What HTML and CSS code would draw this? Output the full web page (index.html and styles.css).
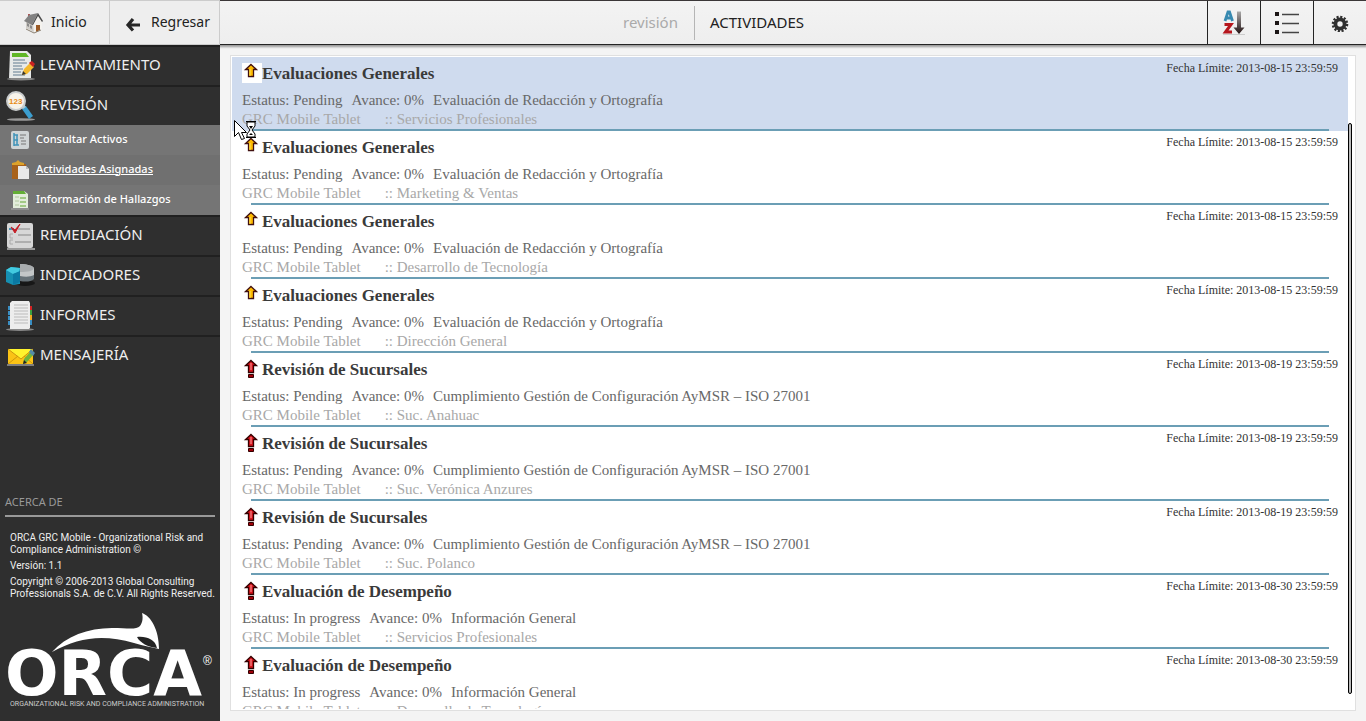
FILE: index.html
```html
<!DOCTYPE html>
<html lang="es">
<head>
<meta charset="utf-8">
<title>ORCA GRC Mobile - Actividades</title>
<link rel="stylesheet" href="styles.css">
</head>
<body>
<div class="app">
  <header class="topbar">
    <nav class="topnav">
      <a class="topnav-link" href="#inicio">
        <svg width="22" height="24" viewBox="0 0 22 24" aria-hidden="true"><path d="M3 10v7l8 4V12z" fill="#cfccc7"/><path d="M10 13l5-8 4 6v7l-8 4z" fill="#f4f2ee"/><path d="M13 14h4v5l-4 2z" fill="#9a5a26"/><path d="M4 12l2 1v3l-2-1zM7 14l2 1v3l-2-1z" fill="#8a8a8a"/><path d="M5 3h2v4H5z" fill="#a55"/><path d="M1 10L6 4l9-2-5 10-1 2z" fill="#828282"/><path d="M15 2l5 8-1 1-4-6-5 9-1 0z" fill="#4a4a4a"/><path d="M3 18l8 4 7-3" stroke="#8a8072" fill="none"/></svg>
        <span>Inicio</span>
      </a>
      <a class="topnav-link topnav-back" href="#regresar">
        <svg width="18" height="18" viewBox="0 0 18 18" aria-hidden="true"><path d="M9 3L4 9l5 5.500M4 9h12" fill="none" stroke="#262626" stroke-width="3.200"/></svg>
        <span>Regresar</span>
      </a>
    </nav>
    <div class="crumbs"><span class="crumb-parent">revisión</span><h1 class="crumb-title">ACTIVIDADES</h1></div>
    <div class="tools">
      <button class="tool" aria-label="Ordenar"><svg width="24" height="26" viewBox="0 0 24 26"><defs><linearGradient id="down" x2="0" y2="1"><stop stop-color="#aaa"/><stop offset="1" stop-color="#211"/></linearGradient></defs><path d="M3 11L6 2h1.500l3 9M4.500 8h5" fill="none" stroke="#3789b0" stroke-width="2.800"/><path d="M2.500 14.500H9l-5.500 7.500H10" fill="none" stroke="#b5161d" stroke-width="3"/><path d="M15 1.500h4v16h3.500L17 24l-5.500-6.500H15z" fill="url(#down)"/><path d="M1 24.500h22" stroke="#ccc"/></svg></button>
      <button class="tool" aria-label="Lista"><svg width="26" height="26" viewBox="0 0 26 26"><path d="M1 2h4v4H1zM1 11h4v4H1zM1 20h4v4H1z" fill="#1b1515"/><path d="M8 4.500h17M8 13.500h17M8 22.500h17" stroke="#444" stroke-width="1.500"/></svg></button>
      <button class="tool" aria-label="Configuración"><svg width="18" height="18" viewBox="0 0 18 18"><circle cx="9" cy="10" r="7" fill="none" stroke="#2f2f2f" stroke-width="2.600" stroke-dasharray="2.100 1.565"/><circle cx="9" cy="10" r="4.600" fill="none" stroke="#2f2f2f" stroke-width="3.800"/></svg></button>
    </div>
  </header>

  <aside class="sidebar">
    <nav class="menu">
      <a class="menu-item" href="#levantamiento"><svg width="30" height="32" viewBox="0 0 30 32" aria-hidden="true"><ellipse cx="15" cy="29" rx="14" ry="1.500" fill="#888"/><path d="M4 1h17l4 4v23H3z" fill="#e7e9e8"/><path d="M6 3h14l3 4H6z" fill="#5eb626"/><path d="M7 10h12M7 13h14M7 16h9M7 19h10M7 22h8M7 25h12" stroke="#8fa0ad" stroke-width="1.300"/><path d="M16 25l2-6 6-6 4 4-7 7z" fill="#f4b82c"/><path d="M24 12l2-1 3 3-2 3-4-4z" fill="#c92222"/><path d="M16 25l1-4 3 3z" fill="#333"/></svg><span>LEVANTAMIENTO</span></a>
      <a class="menu-item" href="#revision"><svg width="30" height="32" viewBox="0 0 30 32" aria-hidden="true"><ellipse cx="15" cy="29.500" rx="14" ry="1.300" fill="#999"/><path d="M16 19l4-3 7 10-4 3z" fill="#3b9ed0"/><path d="M14 17l4-3 2 3-3 2z" fill="#a8c9d8"/><circle cx="10" cy="11" r="9" fill="#f7f3ea" stroke="#c9cccd" stroke-width="2"/><text x="3" y="14" class="lens-text">123</text></svg><span>REVISIÓN</span></a>
      <div class="submenu">
        <a class="submenu-item" href="#activos"><svg width="20" height="20" viewBox="0 0 20 20" aria-hidden="true"><rect x="1" y="1" width="18" height="18" rx="2" fill="#d0d5d6"/><path d="M4 3v13M4 5h4M4 10h4M4 15h5M7 5v10" stroke="#3f93b8" stroke-width="1.500" fill="none"/><path d="M10 5h6M10 8h4M11 11h5M11 14h5" stroke="#777"/></svg><span>Consultar Activos</span></a>
        <a class="submenu-item is-current" href="#asignadas"><svg width="20" height="20" viewBox="0 0 20 20" aria-hidden="true"><path d="M2 4h14v15H2z" fill="#a8621b"/><path d="M2 3l4-1 2-2 2 2 4 1v2H2z" fill="#dda32b"/><path d="M8 6h8l3 3v10H8z" fill="#e9e9e9"/><path d="M16 6v3h3" fill="#bbb"/></svg><span>Actividades Asignadas</span></a>
        <a class="submenu-item" href="#hallazgos"><svg width="20" height="20" viewBox="0 0 20 20" aria-hidden="true"><path d="M3 1h11l4 3v14H3z" fill="#e3eddb"/><path d="M3 1h11l2 3H3z" fill="#63ae35"/><path d="M5 7h4M5 11h4M5 15h4" stroke="#b0c79e"/><path d="M10 8h6M10 12h6M10 16h6" stroke="#8dbf6a" stroke-width="1.500"/><path d="M1 19h18" stroke="#aaa"/></svg><span>Información de Hallazgos</span></a>
      </div>
      <a class="menu-item" href="#remediacion"><svg width="30" height="32" viewBox="0 0 30 32" aria-hidden="true"><path d="M1 29h28" stroke="#999" stroke-width="2"/><rect x="1" y="3" width="26" height="25" rx="2" fill="#d7d7d7"/><path d="M12 9h12M12 15h13M9 22h16" stroke="#a3a3a3" stroke-width="1.700"/><path d="M7 14H4v4h3M7 20H4v4h3" stroke="#aaa" fill="none"/><path d="M3 9h5" stroke="#4b94b5" stroke-width="2"/><path d="M5 7l4 3 5-6-5 9z" fill="#c41d26" stroke="#c41d26"/></svg><span>REMEDIACIÓN</span></a>
      <a class="menu-item" href="#indicadores"><svg width="30" height="32" viewBox="0 0 30 32" aria-hidden="true"><ellipse cx="19" cy="23" rx="10" ry="3" fill="#171717"/><path d="M0 10l5-3 9 1v16l-7 1-7-3z" fill="#168fb1"/><path d="M0 10l5-3 9 1-1 4-6 2z" fill="#42cae0"/><path d="M7 14l7-3v11l-7 3z" fill="#0b79a3"/><path d="M14 4c5 0 12 1 14 4v10l-14-1z" fill="#c3c6c7"/><path d="M14 4c5 0 12 1 14 4-1 3-6 4-14 4z" fill="#a9adaf"/><path d="M14 16c5 1 10 1 14-1v4c-3 3-9 3-14 2z" fill="#667177"/></svg><span>INDICADORES</span></a>
      <a class="menu-item" href="#informes"><svg width="30" height="32" viewBox="0 0 30 32" aria-hidden="true"><ellipse cx="14" cy="29.500" rx="14" ry="1.500" fill="#888"/><path d="M2 6h4v4H2zM2 11h4v4H2zM2 16h4v4H2zM2 21h4v4H2z" fill="#3a8fc4"/><path d="M23 6h3v4h-3z" fill="#d32323"/><path d="M23 10h3v5h-3z" fill="#3ea13f"/><path d="M23 15h3v5h-3z" fill="#f2aa20"/><path d="M23 20h3v5h-3z" fill="#3a8fc4"/><path d="M6 1h17l1 2v25l-1 1H4V3z" fill="#ededed"/><path d="M8 5h14M8 8h14M8 11h14M8 14h14M8 17h14M8 20h14M8 23h14" stroke="#bbb"/></svg><span>INFORMES</span></a>
      <a class="menu-item" href="#mensajeria"><svg width="30" height="32" viewBox="0 0 30 32" aria-hidden="true"><path d="M1 25h27" stroke="#ccc"/><rect x="2" y="9" width="25" height="15" rx="1" fill="#fbc315"/><path d="M2 9h25L15 19z" fill="#fff32d"/><path d="M2 24l10-8M27 24l-9-8M2 9l13 10 12-10" stroke="#ce960d" fill="none"/><path d="M17 24l1-5 7-8 3 3-7 8z" fill="#71b53d"/><path d="M23 12l2-3 4 4-2 3z" fill="#568ba8"/><path d="M17 24l1-4 3 3z" fill="#222"/></svg><span>MENSAJERÍA</span></a>
    </nav>
    <section class="about">
      <h2 class="about-title">ACERCA DE</h2>
      <div class="about-text">
        <p>ORCA GRC Mobile - Organizational Risk and Compliance Administration ©</p>
        <p>Versión: 1.1</p>
        <p>Copyright © 2006-2013 Global Consulting Professionals S.A. de C.V. All Rights Reserved.</p>
      </div>
      <svg class="logo" viewBox="0 0 220 108" role="img" aria-label="ORCA"><path d="M52 39C66 23 88 15 112 15c16 0 24 2 28-2 3-4 3-9 2-13 9 3 17 17 17 36-7-2-15-3-25-6-31-9-55-6-82 9z" fill="#fff"/><path d="M137 24c9-1 18 2 20 11-9-1-17-5-20-11z" fill="#222"/><text x="5" y="82" class="logo-word">ORCA</text><text x="203" y="52" class="logo-mark">®</text><text x="10" y="93" class="logo-tag">ORGANIZATIONAL RISK AND COMPLIANCE ADMINISTRATION</text></svg>
    </section>
  </aside>

  <main class="content">
    <div class="panel">
      <ul class="activities" id="activities"></ul>
      <div class="scrollbar"></div>
    </div>
  </main>
</div>
<svg class="pointer" width="24" height="21" viewBox="0 0 24 21" aria-hidden="true"><path d="M.5.500v16l4-4 3 7 3-1-3-6h5z" fill="#fff" stroke="#000"/><path d="M13 2h8v4l-3 4 3 4v3h-8v-3l3-4-3-4z" fill="#fff" stroke="#000"/><path d="M12 1.500h10M12 17.500h10" stroke="#000"/><path d="M15 6h4l-2 3zM15 15l2-2 2 2z" fill="#000"/></svg>
<script src="app.js"></script>
</body>
</html>
```
FILE: app.js
```js
const ortografia = "Evaluación de Redacción y Ortografía";
const iso = "Cumplimiento Gestión de Configuración AyMSR – ISO 27001";
const rows = [
  ["Evaluaciones Generales", "Pending", ortografia, "Servicios Profesionales", "2013-08-15"],
  ["Evaluaciones Generales", "Pending", ortografia, "Marketing & Ventas", "2013-08-15"],
  ["Evaluaciones Generales", "Pending", ortografia, "Desarrollo de Tecnología", "2013-08-15"],
  ["Evaluaciones Generales", "Pending", ortografia, "Dirección General", "2013-08-15"],
  ["Revisión de Sucursales", "Pending", iso, "Suc. Anahuac", "2013-08-19"],
  ["Revisión de Sucursales", "Pending", iso, "Suc. Verónica Anzures", "2013-08-19"],
  ["Revisión de Sucursales", "Pending", iso, "Suc. Polanco", "2013-08-19"],
  ["Evaluación de Desempeño", "In progress", "Información General", "Servicios Profesionales", "2013-08-30"],
  ["Evaluación de Desempeño", "In progress", "Información General", "Desarrollo de Tecnología", "2013-08-30"]
];
const medium = '<svg class="priority" width="20" height="20" viewBox="0 0 20 20" aria-hidden="true"><path d="M9 1.500L14.500 6.500h-3v7h-5v-7h-3z" fill="#fb0" stroke="#401010" stroke-width="1.300"/><path d="M8 6v7" stroke="#ffe45c"/></svg>';
const high = '<svg class="priority" width="20" height="20" viewBox="0 0 20 20" aria-hidden="true"><path d="M9 1.500L14.500 6.500h-3v7h-5v-7h-3z" fill="#d8141c" stroke="#300" stroke-width="1.300"/><path d="M9 4v7" stroke="#ea5a5e" stroke-width="2"/><path d="M6.500 15.500h5v3h-5z" fill="#a00008" stroke="#300"/></svg>';
document.getElementById("activities").innerHTML = rows.map((r, i) => `
  <li class="activity${i === 0 ? " is-selected" : ""}">
    <div class="activity-head">${i < 4 ? medium : high}<h2 class="activity-title">${r[0]}</h2><span class="due">Fecha Límite: ${r[4]} 23:59:59</span></div>
    <p class="status"><span>Estatus: ${r[1]}</span><span>Avance: 0%</span><span>${r[2]}</span></p>
    <p class="area"><span>GRC Mobile Tablet</span><span>:: ${r[3].replace("&", "&amp;")}</span></p>
  </li>`).join("");
```
FILE: styles.css
```css
* { box-sizing: border-box; }
body {
  margin: 0;
  font-family: "Noto Sans", "Open Sans", sans-serif;
  background: #f4f4f4;
}
h1, h2, p, ul { margin: 0; padding: 0; font-weight: normal; }
a { color: inherit; text-decoration: none; }
svg { flex: none; }

.app {
  display: grid;
  grid-template: 45px minmax(0, 1fr) / 220px minmax(0, 1fr);
  height: 100vh;
}

.topbar {
  grid-column: 1 / -1;
  display: grid;
  grid-template-columns: 220px 1fr auto;
  color: #222;
  background: linear-gradient(#f3f3f3, #eee);
  border-top: 1px solid #3b3738;
  border-bottom: 1px solid #242424;
  box-shadow: 0 1px 2px 1px #999;
}
.topnav { display: grid; grid-template-columns: 1fr 1fr; margin-top: -1px; margin-bottom: -1px; }
.topnav-link {
  display: flex;
  align-items: center;
  gap: 6px;
  padding-left: 23px;
  font-size: 14px;
  background: #eee;
  border: 1px solid #ccc;
  border-left-width: 0;
}
.topnav-link span { padding-bottom: 2px; }
.topnav-back { padding-left: 14px; gap: 9px; }
.topnav-back svg { margin-top: 4px; }

.crumbs { display: flex; align-items: center; justify-content: center; font-size: 15px; line-height: 34px; }
.crumb-parent { color: #aaa; padding: 0 16px 2px 0; }
.crumb-title { font-size: 15px; line-height: 32px; padding: 0 0 2px 15px; border-left: 1px solid #b5b5b5; }

.tools { display: flex; }
.tool {
  width: 53px;
  display: flex;
  align-items: center;
  justify-content: center;
  padding: 0;
  background: none;
  border: 0;
  border-left: 1px solid #242424;
}

.sidebar {
  display: flex;
  flex-direction: column;
  color: #eee;
  background: #2f2f2f;
  position: relative;
}
.menu-item {
  display: flex;
  align-items: center;
  gap: 4px;
  height: 40px;
  padding-left: 6px;
  font-size: 15px;
  border-top: 2px solid #202020;
}
.menu-item span, .submenu-item span { padding-bottom: 4px; }
.submenu { background: #757575; }
.submenu-item {
  display: flex;
  align-items: center;
  gap: 6px;
  height: 30px;
  padding-left: 10px;
  font-size: 11px;
  font-weight: 500;
  color: #fff;
}
.is-current { background: #707070; text-decoration: underline; }
.lens-text { font: bold 8px "Liberation Sans", sans-serif; fill: #e88a16; }

.about { margin-top: auto; }
.about-title {
  margin: 0 5px;
  padding-bottom: 5px;
  font-size: 11px;
  line-height: 16px;
  color: #999;
  border-bottom: 2px solid #999;
}
.about-text { padding: 15px 5px 0 10px; font: 500 10px/12px Roboto, sans-serif; }
.about-text p { margin-bottom: 4px; }
.logo { display: block; width: 100%; margin-top: 13px; }
.logo-word { font: bold 63px "DejaVu Sans", sans-serif; fill: #fff; }
.logo-mark { font: 12px "Liberation Sans", sans-serif; fill: #fff; }
.logo-tag { font: 7px Roboto, sans-serif; fill: #ccc; }

.content { min-height: 0; padding: 10px; }
.panel {
  display: flex;
  height: 100%;
  padding: 1px 3px 1px 1px;
  background: #fff;
  border: 1px solid #e0e0e0;
}
.activities {
  flex: 1;
  overflow: hidden;
  list-style: none;
  font-family: "Liberation Serif", serif;
}
.scrollbar {
  width: 4px;
  margin: 66px 0 15px;
  background: #bbb;
  border: 1px solid #000;
  border-radius: 2px;
}
.activity { height: 74px; padding: 6px 10px 0; }
.activity::after {
  content: "";
  display: block;
  height: 2px;
  margin: 1px 9px 0;
  background: #6b9eb5;
}
.is-selected { background: #cfdbee; }
.is-selected .priority { background: #fff; }
.activity-head { display: flex; height: 28px; }
.activity-title { font-size: 17px; font-weight: bold; line-height: 22px; color: #3a3a3a; flex: 1; }
.due { font-size: 12px; line-height: 10px; color: #333; }
.status { display: flex; gap: 9px; font-size: 15px; line-height: 19px; color: #686868; }
.area { display: flex; gap: 24px; height: 18px; overflow: hidden; font-size: 15px; line-height: 19px; color: #a8a8a8; }
.pointer { position: absolute; left: 234px; top: 120px; }
```
